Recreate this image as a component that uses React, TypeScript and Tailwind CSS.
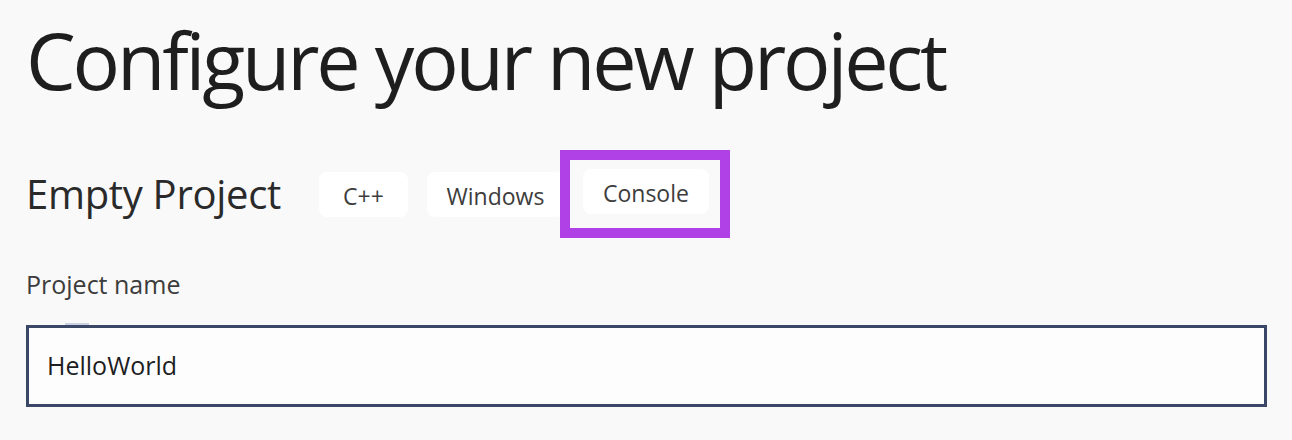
import React from 'react';

const Pill = ({ label, className = '' }: { label: string; className?: string }) => (
  <div className={`h-[45px] rounded-[8px] bg-white flex items-center justify-center pt-[4px] text-[23px] text-[#3d3d3d] ${className}`}>
    {label}
  </div>
);

export default function App() {
  return (
    <div className="min-h-screen bg-[#f9f9f9] pl-[26px] pr-[25px] font-['Open_Sans','Noto_Sans',sans-serif] text-[#1e1e1e]">
      <h1 className="pt-[20px] text-[79px] leading-[80px] tracking-[-3.2px]">Configure your new project</h1>

      <div className="mt-[50px] flex items-center">
        <h2 className="text-[40px] leading-[46px] tracking-[-0.3px] text-[#2a2a2a]">Empty Project</h2>
        <div className="ml-[38px] flex items-center">
          <Pill label="C++" className="w-[89px]" />
          <Pill label="Windows" className="ml-[19px] w-[137px]" />
          <div className="-ml-[4px] border-[10px] border-[#b041e6] pl-[13px] pr-[11px] pt-[9px] pb-[14px]">
            <Pill label="Console" className="w-[126px]" />
          </div>
        </div>
      </div>

      <div className="mt-[30px] text-[25px] leading-[32px] text-[#3c3c3c]">Project name</div>
      <div className="mt-[23px] ml-[39px] h-[2px] w-[24px] bg-[#c9d1e2]" />
      <div className="h-[82px] border-[3px] border-[#3b4766] bg-[#fdfdfe] pl-[18px] flex items-center text-[25px] text-[#1e1e1e]">
        HelloWorld
      </div>
    </div>
  );
}
